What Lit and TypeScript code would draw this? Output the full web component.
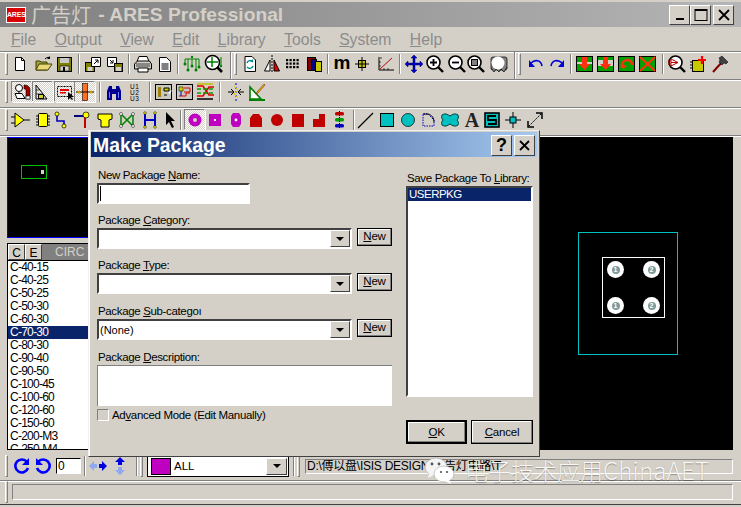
import { LitElement, html, css, svg } from "lit";
import { customElement } from "lit/decorators.js";

const NAVY = "#000080", RED = "#c00000", MAG = "#c000c0", TEAL = "#00c0c0", GRN = "#008000";
const bigArrow = svg`<path d="M10 1l3 3h-2v5h5V7l3 3-3 3v-2h-5v5h2l-3 3-3-3h2v-5H4v2l-3-3 3-3v2h5V4H7z" fill="#0000c0" stroke="#000060" stroke-width=".5"/>`;
const glass = (inner: unknown) => svg`<circle cx="8.5" cy="8.5" r="6.5" fill="#fff" stroke="#000" stroke-width="1.6"/><path d="M13 13l5 5" stroke="#000" stroke-width="2.4"/>${inner}`;
const dropIn = (a: unknown) => svg`<rect x="1.5" y="2.5" width="16" height="15" fill="#00a000" stroke="#000"/>${a}`;

const I: Record<string, unknown> = {
  new: svg`<path d="M5.5 3.5h6l3 3v10h-9z" fill="#fff" stroke="#000"/><path d="M11.5 3.500v3h3" fill="none" stroke="#000"/>`,
  open: svg`<path d="M3 16V7h4l1 1h6v8z" fill="#a0a040" stroke="#404000"/><path d="M3 16l3-6h13l-4 6z" fill="#e8d878" stroke="#404000"/><path d="M12 5c2-2 4-2 5-1" fill="none" stroke="#000"/><path d="M17 2v3h-3z"/>`,
  save: svg`<rect x="3.500" y="3.500" width="14" height="14" fill="#808000" stroke="#000"/><rect x="6" y="4" width="9" height="5" fill="#c8c8c8"/><rect x="6" y="12" width="9" height="5" fill="#d4d0c8" stroke="#000" stroke-width=".6"/><rect x="9" y="13" width="2" height="4"/>`,
  imp: svg`<rect x="2.500" y="8.500" width="9" height="9" fill="#808000" stroke="#000"/><rect x="4.500" y="13" width="5" height="4" fill="#d4d0c8"/><path d="M8.500 3.500h9v9h-9z" fill="#fff" stroke="#000"/><path d="M11 10l4-4m0 3V6h-3" fill="none" stroke="#000"/>`,
  exp: svg`<path d="M2.500 3.500h9v9h-9z" fill="#fff" stroke="#000"/><rect x="9.500" y="9.500" width="8" height="8" fill="#808000" stroke="#000"/><rect x="11" y="13" width="5" height="4" fill="#d4d0c8"/><path d="M5 6l3 3m0-3v3H5" fill="none" stroke="#000"/>`,
  print: svg`<path d="M6 2.500h8l2 5H4z" fill="#fff" stroke="#000"/><path d="M1.500 10l3-3h12l2 3v5h-17z" fill="#d4d0c8" stroke="#000"/><path d="M5 14h10v4H5z" fill="#fff" stroke="#000"/><path d="M3 10h14M3 12h14" stroke="#000" stroke-width=".7"/>`,
  page: svg`<path d="M4.500 3.500h7l4 4v10h-11z" fill="#fff" stroke="#000"/><rect x="6.500" y="9" width="7" height="7" fill="#808080"/>`,
  net: svg`<path d="M3 5h14M6 5v10M14 5v10M10 5v6M3 5v4" stroke="${GRN}" fill="none"/><g fill="${GRN}"><circle cx="3" cy="10" r="1.500"/><circle cx="6" cy="16" r="1.500"/><circle cx="10" cy="12" r="1.500"/><circle cx="14" cy="16" r="1.500"/><circle cx="17" cy="13" r="1.500"/><circle cx="10" cy="3" r="1.200"/></g><path d="M17 5v8" stroke="${GRN}"/>`,
  netz: svg`<circle cx="8.500" cy="8.500" r="7" fill="#fff" stroke="#000" stroke-width="1.600"/><path d="M3 8h11M8 3v10" stroke="${GRN}" stroke-width="1.500"/><path d="M13 13l5 5" stroke="#000" stroke-width="2.600"/><path d="M17 3v8" stroke="${GRN}"/><circle cx="17" cy="12" r="1.200" fill="${GRN}"/>`,
  refresh: svg`<path d="M5 2.500h7l3.500 3.500v11.500H5z" fill="#fff" stroke="#000"/><path d="M7 9c1-3 4-3 6-1M13 12c-1 3-4 3-6 1" fill="none" stroke="#009090" stroke-width="1.500"/><path d="M13 5v3h-3z" fill="#009090"/>`,
  mirror: svg`<path d="M8 6L2.500 17H8z" fill="#fff" stroke="#000"/><path d="M12 6l5.500 11H12z" fill="#e00000" stroke="#000"/><path d="M10 1v18" stroke="#000" stroke-dasharray="2 1"/>`,
  grid: svg`<g fill="#000">${[0,1,2].map((r)=>[0,1,2,3].map((c)=>svg`<rect x="${3+c*3.5}" y="${5+r*3.5}" width="2.200" height="2.200"/>`))}</g>`,
  colors: svg`<rect x="3.500" y="3.500" width="8" height="13" fill="#800000" stroke="#000"/><rect x="7.500" y="5.500" width="5" height="11" fill="#000080" stroke="#000"/><rect x="11.500" y="7.500" width="6" height="10" fill="#c8c800" stroke="#000"/>`,
  m: svg`<text x="10" y="15" text-anchor="middle" font-family="Liberation Sans, sans-serif" font-weight="700" font-size="19" fill="#000">m</text>`,
  orig: svg`<path d="M10 3v14M3 10h14" stroke="#000"/><rect x="6.500" y="6.500" width="7" height="7" fill="#c0c000" stroke="#000"/><path d="M10 6v8M6 10h8" stroke="#000"/>`,
  graph: svg`<path d="M4 3v13h15" fill="none" stroke="#000"/><path d="M5 15L17 4" stroke="${RED}"/><path d="M6 3v2M4 8h2M4 12h2M9 14v2M13 14v2" stroke="#000" stroke-width=".7"/>`,
  move: bigArrow,
  zin: glass(svg`<path d="M5 8.500h7M8.500 5v7" stroke="#000" stroke-width="1.800"/>`),
  zout: glass(svg`<path d="M5 8.500h7" stroke="#000" stroke-width="1.800"/>`),
  zfit: glass(svg`<rect x="5.500" y="5.500" width="6" height="6" fill="#808080" stroke="#000"/>`),
  zall: svg`<rect x="3" y="3" width="16" height="13" rx="2" fill="#808080" stroke="#000" stroke-width=".7"/><path d="M3 14l3 4 2-3 3 3 2-3 3 3 3-5" fill="#808080" stroke="#000" stroke-width=".7"/><circle cx="10" cy="9" r="6.500" fill="#fff"/>`,
  undo: svg`<path d="M5 9c4-4 10-3 11 3" fill="none" stroke="#0000d0" stroke-width="1.600"/><path d="M3 6v7h6z" fill="#0000d0"/>`,
  redo: svg`<path d="M15 9C11 5 5 6 4 12" fill="none" stroke="#0000d0" stroke-width="1.600"/><path d="M17 6v7h-6z" fill="#0000d0"/>`,
  b1: dropIn(svg`<rect x="2" y="8" width="15" height="2" fill="#d4d0c8"/><path d="M7 3h5v7h3l-5.500 6L4 10h3z" fill="#ff3010"/>`),
  b2: svg`<rect x="1.500" y="2.500" width="16" height="15" fill="#d4d0c8" stroke="#000"/><rect x="2" y="12" width="15" height="5" fill="#00a000"/><rect x="2" y="3" width="15" height="3" fill="#00a000"/><path d="M7 3h5v7h3l-5.500 6L4 10h3z" fill="#ff3010"/>`,
  b3: dropIn(svg`<path d="M5 14c-2-9 10-11 10-3" fill="none" stroke="#ff3010" stroke-width="2.400"/><path d="M4 10l2 5 4-3z" fill="#ff3010"/>`),
  b4: dropIn(svg`<path d="M2 3l15 14M17 3L2 17" stroke="#ff3010" stroke-width="2"/>`),
  vis: glass(svg`<path d="M4 5v7l7-3.500zM1 7h3M1 10h3" fill="#fff" stroke="${RED}"/><path d="M4 8.500h7" stroke="${RED}"/>`),
  newchip: svg`<rect x="4.500" y="6.500" width="11" height="11" fill="#c8c800" stroke="#000"/><path d="M2 8h2M2 11h2M2 14h2" stroke="#000"/><path d="M14 2v8M10 6h8" stroke="#ff0000" stroke-width="2.200"/>`,
  hammer: svg`<path d="M3 18L13 7" stroke="#800000" stroke-width="2"/><path d="M9 4l3-2 6 6-2 2-2-1-2 2-3-3 1-2z" fill="#404040" stroke="#000" stroke-width=".5"/>`,
  comp: svg`<circle cx="7" cy="6" r="3.500" fill="#fff" stroke="#000"/><path d="M7 9.500v2" stroke="#000"/><path d="M3 11.500h7l3 5H5z" fill="#fff" stroke="#000"/><path d="M12 3c4 0 6 2 6 5v9h-4V8c0-1-1-1-2-1z" fill="#a00000" stroke="#000" stroke-width=".6"/><rect x="14" y="14" width="4" height="3" fill="#fff" stroke="#000" stroke-width=".6"/>`,
  pkgm: svg`<path d="M3 17V3l11 14z" fill="none" stroke="#000"/><path d="M3 8h3M3 12h6" stroke="#000" stroke-width=".7"/><rect x="5.500" y="12.500" width="5" height="4" fill="#d8d020" stroke="#000"/>`,
  sel: svg`<rect x="2.500" y="4.500" width="14" height="10" fill="none" stroke="#000" stroke-dasharray="2 1"/><rect x="5" y="7" width="9" height="2" fill="#e00000"/><rect x="5" y="10" width="6" height="1.500" fill="#e00000"/><path d="M13 10v8l2-2 2 2 1-1-2-2h3z" fill="#000"/>`,
  cut: svg`<rect x="7.500" y="1.500" width="5" height="17" fill="#ff7020" stroke="#000" stroke-width=".6"/><path d="M1 10h18" stroke="#000"/><circle cx="4" cy="10" r="1.500" fill="#c8a000"/><circle cx="16" cy="10" r="1.500" fill="#c8a000"/>`,
  bino: svg`<path d="M3 18V9l2-5h3v14zM12 4h3l2 5v9h-5z" fill="#000090"/><rect x="8" y="7" width="4" height="5" fill="#000090"/><path d="M5 10h1v6H5zM14 10h1v6h-1z" fill="#6080ff"/>`,
  u123: svg`<text font-family="Liberation Sans, sans-serif" font-size="6.500" fill="#000" letter-spacing=".6"><tspan x="5" y="6.500">U1</tspan><tspan x="5" y="12.500">U2</tspan><tspan x="5" y="18.500">U3</tspan></text>`,
  bd1: svg`<rect x="1.500" y="2.500" width="16" height="15" fill="#c8c8c0" stroke="#000"/><rect x="4" y="5" width="3" height="10" fill="#a08000"/><path d="M10 6h5v3h-5zM10 13h3" stroke="#000" fill="#d0d000"/><path d="M14 11l4-3-2 4z" fill="#fff"/>`,
  bd2: svg`<rect x="1.500" y="2.500" width="16" height="15" fill="#c8c8c0" stroke="#000"/><rect x="4" y="5" width="4" height="4" fill="#d0d000" stroke="#000" stroke-width=".5"/><path d="M9 6h6v4H9M4 14h7v-3h4" fill="none" stroke="#e00000"/><path d="M6 9v5" stroke="#0000c0"/>`,
  tracks: svg`<path d="M2 4h6l6 9h5M2 14h6l6-9h5" fill="none" stroke="#e00000" stroke-width="1.500"/><path d="M2 7h16M2 11h16" stroke="#00a000" stroke-width="1.500" stroke-dasharray="4 2"/><path d="M2 17h16" stroke="#000" stroke-width="1.500"/><path d="M2 2h16" stroke="#c0c000" stroke-width="1.500"/>`,
  rule: svg`<path d="M2 10h6M12 10h6" stroke="#000"/><path d="M5 7l3 3-3 3M15 7l-3 3 3 3" fill="none" stroke="#000"/><path d="M10 1v18" stroke="#0000c0" stroke-dasharray="2 2"/><path d="M8 4l4 4-4 4 4 4" fill="none" stroke="#e0c000"/>`,
  sq: svg`<path d="M3 17V5l11 12z" fill="#fff" stroke="#008000" stroke-width="1.600"/><path d="M2 18h16" stroke="#008000" stroke-width="2"/><path d="M10 10l7-8 1 1-7 8-2 1z" fill="#e0c000" stroke="#800000" stroke-width=".5"/>`,
  sym: svg`<path d="M4 3v14l9-7z" fill="#ffff00" stroke="#000"/><path d="M0 7h4M0 13h4M13 10h6" stroke="#000"/>`,
  chip: svg`<rect x="5.500" y="3.500" width="9" height="13" rx="1" fill="#ffff00" stroke="#000"/><path d="M3 6h2M3 9h2M3 12h2M3 15h2M15 6h2M15 9h2M15 12h2M15 15h2" stroke="#000"/>`,
  track: svg`<path d="M5 4v7h7v4" fill="none" stroke="#0000c0" stroke-width="1.600"/><circle cx="5" cy="4" r="2" fill="#ffff00" stroke="#000" stroke-width=".7"/><circle cx="12" cy="16" r="2" fill="#ffff00" stroke="#000" stroke-width=".7"/>`,
  via: svg`<path d="M1 6h11" stroke="${NAVY}" stroke-width="2"/><path d="M12 6v12" stroke="${RED}" stroke-width="2"/><circle cx="13" cy="5" r="3" fill="#ffff00" stroke="#000" stroke-width=".7"/>`,
  fill: svg`<path d="M3 4h14v5l-3 1v7H6v-7L3 9z" fill="#ffff00" stroke="#000"/>`,
  rats: svg`<path d="M4 4l12 12M16 4L4 16M4 4v12M16 4v12" stroke="${GRN}" stroke-width="1.500"/><g fill="#fff" stroke="#000" stroke-width=".5"><circle cx="4" cy="4" r="1.500"/><circle cx="16" cy="4" r="1.500"/><circle cx="4" cy="16" r="1.500"/><circle cx="16" cy="16" r="1.500"/></g>`,
  h: svg`<path d="M5 4v12M15 4v12M5 10h10" stroke="#0000c0" stroke-width="2" fill="none"/><g fill="#ffff00" stroke="#000" stroke-width=".5"><circle cx="5" cy="3" r="1.300"/><circle cx="15" cy="3" r="1.300"/><circle cx="5" cy="17" r="1.300"/><circle cx="15" cy="17" r="1.300"/></g>`,
  arrow: svg`<path d="M6 2l9 9h-4l3 6-2 1-3-6-3 3z" fill="#000"/>`,
  padr: svg`<circle cx="10" cy="10" r="6.500" fill="${MAG}"/><circle cx="10" cy="10" r="2" fill="#d4d0c8"/>`,
  pads: svg`<rect x="4" y="4" width="12" height="12" fill="${MAG}"/><rect x="9" y="9" width="2" height="2" fill="#fff"/>`,
  pado: svg`<path d="M7 3h6l2 3v8l-2 3H7l-2-3V6z" fill="${MAG}"/><circle cx="10" cy="10" r="1.400" fill="#fff"/>`,
  padd: svg`<path d="M4 8l3-4h6l3 4v9H4z" fill="${RED}"/>`,
  padc: svg`<circle cx="10" cy="10" r="6" fill="${RED}"/>`,
  pade: svg`<rect x="4" y="4" width="12" height="13" fill="${RED}"/>`,
  padp: svg`<path d="M10 4h6v13H4V9h6z" fill="${RED}"/>`,
  stack: svg`<rect x="5" y="2" width="9" height="3.500" rx="1.500" fill="${RED}"/><rect x="5" y="8" width="9" height="3.500" rx="1.500" fill="#00a000"/><rect x="5" y="14" width="9" height="3.500" rx="1.500" fill="#0000c0"/><path d="M9.500 1v18" stroke="#000" stroke-dasharray="1 1"/>`,
  line: svg`<path d="M3 18L18 3" stroke="#000" stroke-width="1.200"/>`,
  box: svg`<rect x="3.500" y="3.500" width="13" height="13" fill="${TEAL}" stroke="#000"/>`,
  circ: svg`<circle cx="10" cy="10" r="6.500" fill="${TEAL}" stroke="#000" stroke-width=".7"/>`,
  arc: svg`<path d="M4 16V4h5l6 6v6z" fill="none" stroke="#0000c0" stroke-dasharray="1.500 1"/><path d="M4 4h5c4 1 6 4 6 8" fill="none" stroke="#000"/>`,
  poly: svg`<path d="M2 5c3-2 5-1 8 1 3-2 5-3 8-1 1 3 0 4-1 5 1 1 2 3 1 5-3 2-5 1-8-1-3 2-5 3-8 1-1-2 0-4 1-5-1-1-2-3-1-5z" fill="${TEAL}" stroke="#004040"/>`,
  txt: svg`<text x="10" y="17" text-anchor="middle" font-family="Liberation Serif, serif" font-weight="700" font-size="20" fill="#222">A</text>`,
  sbox: svg`<rect x="3" y="3" width="14" height="14" fill="${TEAL}" stroke="#000" stroke-width="1.600"/><path d="M14 6H6v4h8v4H6" fill="none" stroke="#000" stroke-width="1.800"/>`,
  mark: svg`<path d="M10 2v16M2 10h16" stroke="#000"/><rect x="7" y="7" width="6" height="6" fill="${TEAL}" stroke="#000"/>`,
  dim: svg`<path d="M4 16L16 4" stroke="#000" stroke-dasharray="2 1"/><path d="M11 3h6v6M3 11v6h6" fill="none" stroke="#000" stroke-width="1.500"/>`,
  rotr: svg`<path d="M15 6a6.500 6.500 0 1 0 1 6" fill="none" stroke="#0000ff" stroke-width="2.600"/><path d="M17 2v7h-7z" fill="#0000ff"/>`,
  rotl: svg`<path d="M5 6a6.500 6.500 0 1 1-1 6" fill="none" stroke="#0000ff" stroke-width="2.600"/><path d="M3 2v7h7z" fill="#0000ff"/>`,
  flipx: svg`<path d="M1 10l5-5v3h3v4H6v3z" fill="#90a8f0"/><path d="M19 10l-5-5v3h-3v4h3v3z" fill="#0000e0"/>`,
  flipy: svg`<path d="M10 1l5 5h-3v3H8V6H5z" fill="#0000e0"/><path d="M10 19l5-5h-3v-3H8v3H5z" fill="#90a8f0"/>`,
};

type Item = [string, number, boolean?];
const row1: Item[] = [["grip",6],["new",20],["open",43],["save",64],["sep",79],["imp",93],["exp",115],["sep",129],["print",143],["page",165],["sep",178],["net",192],["netz",214],["brk",231],["grip",235],["refresh",250],["mirror",272],["grid",293],["colors",314],["sep",328],["m",342],["orig",362],["graph",385],["sep",400],["move",414],["zin",435],["zout",457],["zfit",476],["zall",498],["brk",515],["grip",519],["undo",536],["redo",557],["sep",571],["b1",585],["b2",606],["b3",627],["b4",648],["sep",663],["vis",677],["newchip",698],["hammer",720]];
const row2: Item[] = [["grip",6],["comp",22,true],["pkgm",43,true],["sel",65,true],["cut",85,true],["sep",100],["bino",114],["u123",135],["sep",150],["bd1",164],["bd2",185],["tracks",205],["sep",220],["rule",236],["sq",257]];
const row3: Item[] = [["grip",6],["sym",21],["chip",43],["track",62],["via",83],["fill",105],["rats",127],["h",150],["arrow",170],["sep",181],["padr",195,true],["pads",215],["pado",236],["padd",256],["padc",277],["pade",298],["padp",319],["stack",340],["sep",354],["line",365],["box",387],["circ",408],["arc",429],["poly",450],["txt",472],["sbox",492],["mark",513],["dim",535]];
const rowS1: Item[] = [["grip",6],["rotr",22],["rotl",43]];
const rowS2: Item[] = [["sep",85],["flipx",98],["flipy",120]];

const PARTS = ["C-40-15","C-40-25","C-50-25","C-50-30","C-60-30","C-70-30","C-80-30","C-90-40","C-90-50","C-100-45","C-100-60","C-120-60","C-150-60","C-200-M3","C-250-M4"];
const MENUS: [string, string][] = [["F","ile"],["O","utput"],["V","iew"],["E","dit"],["L","ibrary"],["T","ools"],["S","ystem"],["H","elp"]];
const PATH = "D:\\傅以盘\\ISIS DESIGN\\广告灯电路\\T";

@customElement("app-root")
export class AppRoot extends LitElement {
  static styles = css`
    :host { display: block; width: 741px; height: 507px; overflow: hidden; }
    * { box-sizing: border-box; }
    .win { position: relative; width: 741px; height: 507px; background: #d4d0c8; display: flex; flex-direction: column; padding-top: 2px; font-family: "Liberation Sans", "Noto Sans CJK SC", sans-serif; font-size: 11.5px; color: #000; }
    .title { height: 25px; flex: none; background: linear-gradient(90deg, #808080, #b5b5b5); display: flex; align-items: center; padding: 0 7px 0 6px; color: #d4d0c8; font-weight: 700; font-size: 19.2px; white-space: pre; }
    .logo { width: 20px; height: 16px; background: #d80000; border: 1px solid #fff; color: #fff; font-size: 7px; font-weight: 700; line-height: 14px; text-align: center; letter-spacing: -.2px; margin-right: 5px; overflow: hidden; }
    .cjk { font-weight: 400; font-size: 20px; font-family: "Noto Sans CJK SC", sans-serif; margin-right: 2px; }
    .ctrls { margin-left: auto; display: flex; }
    .cb { width: 21px; height: 20px; background: #d4d0c8; border: 1px solid; border-color: #fff #404040 #404040 #fff; display: flex; align-items: center; justify-content: center; }
    .cb.gap { margin-left: 2px; }
    .menu { height: 24px; flex: none; display: flex; padding: 1px 0 0 11px; gap: 18.4px; font-size: 15.7px; font-weight: 400; color: #8c8c8c; align-items: center; }
    .row { height: 28px; flex: none; display: flex; align-items: center; padding-bottom: 3px; border-top: 1px solid #808080; box-shadow: inset 0 1px 0 #fff; }
    .it { flex: none; width: 20px; height: 20px; display: block; }
    .it.sel { background: repeating-conic-gradient(#fff 0 25%, #d4d0c8 0 50%) 0 0 / 2px 2px; box-shadow: -1px -1px 0 #808080, 1px 1px 0 #fff; }
    .sep { flex: none; width: 2px; height: 20px; border-left: 1px solid #808080; border-right: 1px solid #fff; }
    .grip { flex: none; width: 3px; height: 22px; border: 1px solid; border-color: #fff #808080 #808080 #fff; }
    .brk { flex: none; width: 2px; align-self: stretch; margin-bottom: -3px; border-left: 1px solid #808080; border-right: 1px solid #fff; }
    .main { height: 317px; flex: none; display: flex; padding: 1px 8px 2px 0; border-top: 1px solid #808080; box-shadow: inset 0 1px 0 #fff; }
    .left { width: 100px; flex: none; padding-left: 7px; display: flex; flex-direction: column; }
    .over { height: 101px; flex: none; background: #000; border: 1px solid #0000ff; position: relative; }
    .ogr { position: absolute; left: 13px; top: 27px; width: 26px; height: 14px; border: 1px solid #00c000; }
    .opin { position: absolute; left: 19px; top: 4px; width: 3px; height: 4px; background: #d4d0c8; }
    .list { flex: 1; min-height: 0; margin-top: 5px; border: 1px solid #000; background: #fff; overflow: hidden; display: flex; flex-direction: column; }
    .lhead { height: 17px; flex: none; display: flex; border-bottom: 1px solid #000; background: #808080; color: #d4d0c8; font-size: 12px; line-height: 16px; }
    .lb { width: 17px; text-align: center; background: #d4d0c8; color: #000; border: 1px solid; border-color: #fff #404040 #404040 #fff; }
    .ltitle { padding-left: 13px; white-space: nowrap; }
    .li { height: 13px; flex: none; line-height: 13px; font-size: 12px; padding-left: 2px; letter-spacing: -.75px; white-space: nowrap; }
    .li.on { background: #0a246a; color: #fff; }
    .canvas { flex: 1; min-width: 0; background: #000; position: relative; }
    .cy { position: absolute; left: 478px; top: 95px; width: 100px; height: 123px; border: 1px solid #00c0c0; }
    .wh { position: absolute; left: 502px; top: 120px; width: 63px; height: 61px; border: 1px solid #fff; }
    .pad { position: absolute; width: 17px; height: 17px; border-radius: 50%; background: #fff; display: flex; align-items: center; justify-content: center; }
    .hole { width: 8px; height: 8px; border-radius: 50%; background: #7f9a9a; color: #fff; font-size: 7px; line-height: 8px; text-align: center; font-weight: 700; }
    .s1 { height: 28px; flex: none; display: flex; align-items: center; position: relative; }
    .num { flex: none; width: 25px; height: 16px; margin-left: 3px; background: #fff; border: 1px solid; border-color: #000 #fff #fff #000; font-size: 12px; line-height: 14px; padding-left: 1px; }
    .combo { flex: none; width: 142px; height: 21px; margin-left: 4.5px; background: #fff; border: 1px solid #000; display: flex; align-items: center; padding: 1px; font-size: 11.5px; gap: 3px; }
    .sw { width: 20px; height: 17px; margin-left: 2px; background: #c000c0; border: 1px solid #000; }
    .dd { margin-left: auto; width: 21px; height: 17px; flex: none; background: #d4d0c8; border: 1px solid; border-color: #fff #404040 #404040 #fff; display: flex; align-items: center; justify-content: center; }
    .tri { width: 0; height: 0; border: 4px solid transparent; border-top: 4px solid #000; border-bottom: 0; }
    .pathb { flex: none; width: 428px; height: 15px; margin-left: 5.5px; border: 1px solid; border-color: #808080 #fff #fff #808080; font-size: 12px; line-height: 13px; padding-left: 1px; white-space: nowrap; overflow: hidden; letter-spacing: -.25px; }
    .s2 { height: 23px; flex: none; display: flex; align-items: center; padding: 0 8px 1px 5px; gap: 4px; border-top: 1px solid #808080; box-shadow: inset 0 1px 0 #fff; }
    .s2box { flex: 1; height: 16px; border: 1px solid; border-color: #808080 #fff #fff #808080; }
    .bottom { flex: none; height: 1px; background: #404040; margin-top: 1px; }
    .dlg { position: absolute; left: 88px; top: 130px; width: 452px; height: 327px; background: #d4d0c8; border: 1px solid; border-color: #f0f0f0 #404040 #404040 #f0f0f0; padding: 1px 2px 0; display: flex; flex-direction: column; box-shadow: inset 1px 0 0 #fff; }
    .dt { height: 25px; flex: none; background: linear-gradient(90deg, #0a246a, #a6caf0); color: #fff; font-size: 19.4px; font-weight: 700; display: flex; align-items: center; padding: 2px 2px 0 2px; }
    .dtb { margin-left: auto; display: flex; gap: 2px; }
    .dcb { width: 21px; height: 21px; background: #d4d0c8; border: 1px solid; border-color: #fff #404040 #404040 #fff; display: flex; align-items: center; justify-content: center; color: #000; }
    .dbody { flex: 1; display: flex; padding: 11px 6px 0 6px; }
    .dl { width: 295px; flex: none; display: flex; flex-direction: column; }
    .lab { height: 15px; line-height: 15px; white-space: nowrap; overflow: hidden; padding-left: 1px; font-size: 11.5px; letter-spacing: -.35px; }
    .inp { height: 21px; background: #fff; border: 2px solid; border-color: #404040 #fff #fff #404040; outline: 0; }
    .name { width: 153px; display: flex; align-items: center; padding-left: 1px; }
    .caret { width: 1px; height: 15px; background: #000; }
    .crow { display: flex; align-items: flex-start; gap: 5px; }
    .cmb { width: 255px; height: 21px; background: #fff; border: 2px solid; border-color: #404040 #fff #fff #404040; display: flex; align-items: center; padding-left: 1px; font-size: 11px; }
    .cmb .dd { height: 17px; width: 20px; }
    .nb { width: 35px; height: 18px; background: #d4d0c8; border: 1px solid #000; box-shadow: inset -1px -1px 0 #808080, inset 1px 1px 0 #fff; text-align: center; font-size: 11.5px; line-height: 15px; letter-spacing: -.2px; }
    .mt9 { margin-top: 9px; }
    .mt10 { margin-top: 10px; }
    .desc { height: 41px; background: #fff; border-top: 1px solid #808080; border-left: 1px solid #808080; }
    .chk { display: flex; align-items: center; gap: 3px; margin-top: 2px; height: 13px; font-size: 11.5px; letter-spacing: -.33px; white-space: nowrap; }
    .box { width: 12px; height: 12px; border: 1px solid; border-color: #808080 #fff #fff #808080; }
    .dr { margin-left: 14px; margin-top: 3px; width: 127px; flex: none; display: flex; flex-direction: column; }
    .ll { height: 211px; background: #fff; border: 2px solid; border-color: #404040 #fff #fff #404040; }
    .ll div { background: #0a246a; color: #fff; height: 13px; line-height: 13px; font-size: 11.5px; letter-spacing: -.5px; padding-left: 1px; }
    .btns { display: flex; gap: 4px; margin-top: 23px; }
    .bt { flex: none; width: 62px; height: 24px; background: #d4d0c8; text-align: center; line-height: 22px; border: 1px solid #000; box-shadow: inset -1px -1px 0 #808080, inset 1px 1px 0 #fff; font-size: 11.5px; letter-spacing: -.2px; }
    .bt.def { width: 61px; border-width: 2px; line-height: 20px; }
    u { text-underline-offset: 1px; text-decoration-thickness: 1px; }
    .wm { position: absolute; left: 424px; top: 454px; display: flex; align-items: center; gap: 9px; pointer-events: none; }
    .wmt { font-family: "Noto Sans CJK SC", sans-serif; font-size: 23px; line-height: 30px; color: rgba(255,255,255,.9); text-shadow: 0 1px 1px rgba(0,0,0,.3); white-space: nowrap; font-weight: 300; }
    .wmt span { font-family: "Noto Sans CJK SC", sans-serif; font-size: 24px; letter-spacing: .2px; }
  `;

  private cells(items: Item[], start = 0) {
    let cur = start;
    return items.map(([k, cx, sel]) => {
      const w = k === "grip" ? 3 : k === "sep" || k === "brk" ? 2 : 20;
      const ml = cx - w / 2 - cur;
      cur = cx + w / 2;
      const st = `margin-left:${ml}px`;
      if (k === "grip") return html`<div class="grip" style=${st}></div>`;
      if (k === "sep") return html`<div class="sep" style=${st}></div>`;
      if (k === "brk") return html`<div class="brk" style=${st}></div>`;
      return html`<svg class="it ${sel ? "sel" : ""}" style=${st} viewBox="0 0 20 20">${I[k]}</svg>`;
    });
  }

  private combo(val = "") {
    return html`<div class="crow">
      <div class="cmb"><span>${val}</span><div class="dd"><div class="tri"></div></div></div>
      <div class="nb"><u>N</u>ew</div>
    </div>`;
  }

  render() {
    const padPos = [[4, 3, "1"], [40, 3, "2"], [4, 39, "1"], [40, 39, "2"]] as [number, number, string][];
    return html`<div class="win">
      <div class="title">
        <div class="logo">ARES</div><span class="cjk">广告灯</span><span> - ARES Professional</span>
        <div class="ctrls">
          <div class="cb"><svg width="12" height="12"><rect x="2" y="9" width="8" height="2"/></svg></div>
          <div class="cb"><svg width="14" height="14"><rect x="1" y="1.500" width="12" height="11" fill="none" stroke="#000"/><rect x="1" y="1" width="12" height="2"/></svg></div>
          <div class="cb gap"><svg width="12" height="12"><path d="M1 1l10 10M11 1L1 11" stroke="#000" stroke-width="1.800"/></svg></div>
        </div>
      </div>
      <div class="menu">${MENUS.map(([a, b]) => html`<span><u>${a}</u>${b}</span>`)}</div>
      <div class="row">${this.cells(row1)}</div>
      <div class="row">${this.cells(row2)}</div>
      <div class="row">${this.cells(row3)}</div>
      <div class="main">
        <div class="left">
          <div class="over"><div class="ogr"><div class="opin"></div></div></div>
          <div class="list">
            <div class="lhead"><div class="lb">C</div><div class="lb">E</div><div class="ltitle">CIRC T</div></div>
            ${PARTS.map((p) => html`<div class="li ${p === "C-70-30" ? "on" : ""}">${p}</div>`)}
          </div>
        </div>
        <div class="canvas">
          <div class="cy"></div>
          <div class="wh">${padPos.map(([x, y, n]) => html`<div class="pad" style="left:${x}px;top:${y}px"><div class="hole">${n}</div></div>`)}</div>
        </div>
      </div>
      <div class="s1">
        ${this.cells(rowS1)}
        <div class="num" style="margin-left:3px">0</div>
        ${this.cells(rowS2, 81)}
        ${this.cells([["sep", 137], ["grip", 141]], 130)}
        <div class="combo"><div class="sw"></div><span>ALL</span><div class="dd"><div class="tri"></div></div></div>
        ${this.cells([["sep", 294], ["grip", 298]], 289)}
        <div class="pathb">${PATH}</div>
      </div>
      <div class="s2"><div class="grip"></div><div class="s2box"></div></div>
      <div class="bottom"></div>

      <div class="dlg">
        <div class="dt">Make Package
          <div class="dtb">
            <div class="dcb" style="font-size:18px;font-weight:700">?</div>
            <div class="dcb"><svg width="13" height="13"><path d="M2 2l9 9M11 2l-9 9" stroke="#000" stroke-width="1.800"/></svg></div>
          </div>
        </div>
        <div class="dbody">
          <div class="dl">
            <div class="lab">New Package <u>N</u>ame:</div>
            <div class="inp name"><div class="caret"></div></div>
            <div class="lab mt9">Package <u>C</u>ategory:</div>
            ${this.combo()}
            <div class="lab mt9">Package <u>T</u>ype:</div>
            ${this.combo()}
            <div class="lab mt10">Package <u>S</u>ub-categoı</div>
            ${this.combo("(None)")}
            <div class="lab mt10">Package <u>D</u>escription:</div>
            <div class="desc"></div>
            <div class="chk"><div class="box"></div><span>Ad<u>v</u>anced Mode (Edit Manually)</span></div>
          </div>
          <div class="dr">
            <div class="lab">Save Package To <u>L</u>ibrary:</div>
            <div class="ll"><div>USERPKG</div></div>
            <div class="btns"><div class="bt def"><u>O</u>K</div><div class="bt"><u>C</u>ancel</div></div>
          </div>
        </div>
      </div>

      <div class="wm">
        <svg width="32" height="32" viewBox="0 0 32 32">
          <ellipse cx="12" cy="13" rx="11" ry="9" fill="#f4f4f4" stroke="#999" stroke-width=".5"/><path d="M5 19l-1 5 6-3z" fill="#f4f4f4"/>
          <ellipse cx="20" cy="20" rx="10" ry="8" fill="#fff" stroke="#999" stroke-width=".5"/><path d="M25 26l2 4-6-3z" fill="#fff"/>
          <circle cx="8" cy="10" r="1.400" fill="#555"/><circle cx="15" cy="10" r="1.400" fill="#555"/><circle cx="17" cy="18" r="1.100" fill="#555"/><circle cx="23" cy="18" r="1.100" fill="#555"/>
        </svg>
        <div class="wmt">电子技术应用<span>ChinaAET</span></div>
      </div>
    </div>`;
  }
}
